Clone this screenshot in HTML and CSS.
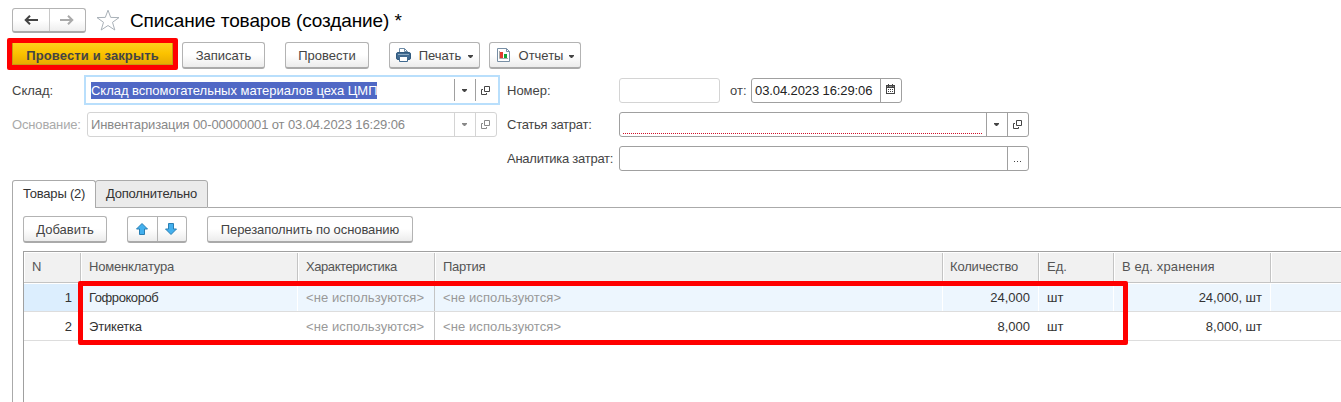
FILE: index.html
```html
<!DOCTYPE html>
<html lang="ru">
<head>
<meta charset="utf-8">
<title>Списание товаров (создание)</title>
<link rel="stylesheet" href="styles.css">
</head>
<body>
<svg class="defs" width="0" height="0">
  <symbol id="open" viewBox="0 0 9 9"><path d="M3.500 .5h5v5h-5zM2 3.500H.5v5h5V7" fill="none" stroke="currentColor"/></symbol>
  <symbol id="caret" viewBox="0 0 5 3"><path d="M0 0h5v1L3 3H2L0 1z" fill="currentColor"/></symbol>
</svg>
<header class="head">
  <div class="nav">
    <span class="nav-btn"><svg width="14" height="10" viewBox="0 0 14 10"><path d="M6 .7L1.700 5 6 9.300M2 5h12" fill="none" stroke="#444" stroke-width="2"/></svg></span>
    <span class="nav-btn"><svg width="14" height="10" viewBox="0 0 14 10"><path d="M8 .7L12.300 5 8 9.300M12 5H0" fill="none" stroke="#aaa" stroke-width="2"/></svg></span>
  </div>
  <svg class="star" width="24" height="22" viewBox="0 0 24 22"><path d="M12 1.200l2.700 7.200 8.300.2-6.500 4.700 2.300 7.700-6.800-4.500L5.200 21l2.300-7.700L1 8.600l8.300-.2z" fill="#fff" stroke="#a9b1b8"/></svg>
  <h1 class="title">Списание товаров (создание) *</h1>
</header>
<div class="bar">
  <div class="mark"><button class="primary">Провести и закрыть</button></div>
  <button class="btn b-save"><span>Записать</span></button>
  <button class="btn b-post"><span>Провести</span></button>
  <button class="btn b-print">
    <svg width="15" height="14" viewBox="0 0 15 14"><path d="M3.500 5V.5h5l3 3V5" fill="#fff" stroke="#6d8ba6"/><path d="M8.500.5v3h3" fill="none" stroke="#6d8ba6"/><rect x=".5" y="4.500" width="14" height="7" rx="1.500" fill="#416a90" stroke="#2f597e"/><path d="M2 6.500h11" stroke="#8caac2"/><path d="M3.500 8.500h8v5h-8z" fill="#fff" stroke="#416a90"/></svg>
    <span>Печать</span><svg class="caret" width="5" height="3"><use href="#caret"/></svg>
  </button>
  <button class="btn b-report">
    <svg width="13" height="14" viewBox="0 0 13 14"><path d="M.5.5h9l3 3v10H.5z" fill="#fff" stroke="#788fa5"/><path d="M9.500.5v3h3" fill="none" stroke="#788fa5"/><path d="M2.500 3v7.500H11" fill="none" stroke="#aaa"/><path d="M3 4h3v6H3z" fill="#e23b2e"/><path d="M7 6h3v4H7z" fill="#13a538"/></svg>
    <span>Отчеты</span><svg class="caret" width="5" height="3"><use href="#caret"/></svg>
  </button>
</div>
<main class="form">
  <div class="left">
    <label class="lab">Склад:</label>
    <div class="field focus"><span class="val"><span class="sel">Склад вспомогательных материалов цеха ЦМП</span></span><i class="act"><svg width="5" height="3"><use href="#caret"/></svg></i><i class="act"><svg width="9" height="9"><use href="#open"/></svg></i></div>
    <label class="lab off l-base">Основание:</label>
    <div class="field off"><span class="val v-base">Инвентаризация 00-00000001 от 03.04.2023 16:29:06</span><i class="act"><svg width="5" height="3"><use href="#caret"/></svg></i><i class="act"><svg width="9" height="9"><use href="#open"/></svg></i></div>
  </div>
  <div class="right">
    <label class="lab">Номер:</label>
    <div class="numrow">
      <div class="field off num"></div>
      <label class="lab from">от:</label>
      <div class="field date"><span class="val">03.04.2023 16:29:06</span><i class="act cal"><svg width="9" height="10" viewBox="0 0 9 10"><path d="M0 1h9v9H0z" fill="#444"/><path d="M1 4h7v5H1z" fill="#fff"/><path d="M1 2.500h1M3 2.500h3M7 2.500h1" stroke="#888"/><path d="M2.500 0v2M6.500 0v2" stroke="#444"/><path d="M2 5.500h6M2 7.500h6" stroke="#444" stroke-dasharray="1 1"/></svg></i></div>
    </div>
    <label class="lab l-cost">Статья затрат:</label>
    <div class="field"><span class="val"><span class="required"></span></span><i class="act"><svg width="5" height="3"><use href="#caret"/></svg></i><i class="act"><svg width="9" height="9"><use href="#open"/></svg></i></div>
    <label class="lab l-an">Аналитика затрат:</label>
    <div class="field"><span class="val"></span><i class="act dots"><svg width="7" height="1"><path d="M0 .5h1M3 .5h1M6 .5h1" stroke="#444"/></svg></i></div>
  </div>
</main>
<nav class="tabs">
  <span class="tab on">Товары (2)</span><span class="tab t2">Дополнительно</span><span class="rest"></span>
</nav>
<section class="panel">
  <div class="tools">
    <button class="btn b-add"><span>Добавить</span></button>
    <div class="updown">
      <svg width="12" height="12" viewBox="0 0 12 12"><path d="M6 .5L11.500 6H8.500v5.500h-5V6H.5z" fill="#43b0ee" stroke="#2b7fb3"/></svg>
      <svg width="12" height="12" viewBox="0 0 12 12"><path d="M6 11.500L.5 6h3V.5h5V6h3z" fill="#43b0ee" stroke="#2b7fb3"/></svg>
    </div>
    <button class="btn b-refill"><span>Перезаполнить по основанию</span></button>
  </div>
  <div class="grid">
    <div class="row hdr"><span>N</span><span><b class="h1">Номенклатура</b></span><span><b class="h2">Характеристика</b></span><span><b class="h3">Партия</b></span><span class="c4"><b class="h4">Количество</b></span><span><b>Ед.</b></span><span><b class="h6">В ед. хранения</b></span><span></span></div>
    <div class="row cur"><span class="r">1</span><span><b class="n1">Гофрокороб</b></span><span class="dim">&lt;не используются&gt;</span><span class="dim">&lt;не используются&gt;</span><span class="r q">24,000</span><span>шт</span><span class="r">24,000, шт</span><span></span></div>
    <div class="row last"><span class="r">2</span><span><b class="n2">Этикетка</b></span><span class="dim">&lt;не используются&gt;</span><span class="dim">&lt;не используются&gt;</span><span class="r q">8,000</span><span>шт</span><span class="r">8,000, шт</span><span></span></div>
    <div class="callout"></div>
  </div>
</section>
</body>
</html>
```
FILE: styles.css
```css
* { box-sizing: border-box; }
body { margin: 0; width: 1341px; height: 402px; overflow: hidden; display: flex; flex-direction: column; background: #fff; color: #444; font: 13px/16px "Liberation Sans", Arial, sans-serif; white-space: nowrap; }
svg { display: block; flex: none; }
.defs { position: absolute; }
button { font: inherit; color: inherit; margin: 0; padding: 0; }
b { font-weight: normal; }
.head { display: flex; height: 38px; padding: 8px 0 0 12px; }
.nav { display: flex; width: 74px; height: 25px; border: 1px solid #b3b3b3; border-bottom: 2px solid #aaa; border-radius: 3px; background: linear-gradient(#fff 50%, #eee); }
.nav-btn { flex: 1; display: flex; align-items: center; justify-content: center; }
.nav-btn + .nav-btn { border-left: 1px solid #c8c8c8; }
.star { margin: 1px 0 0 10px; }
.title { margin: 1px 0 0 10px; font-size: 19px; line-height: 23px; font-weight: normal; color: #000; letter-spacing: -.1px; }
.bar { display: flex; height: 37px; padding-left: 7px; align-items: flex-start; }
.mark { width: 171px; height: 32px; padding: 5px; background: #f00; border-radius: 2px; margin-right: 4px; }
.primary { display: block; width: 161px; height: 22px; border: 1px solid #c79a10; border-width: 0 1px 1px; background: linear-gradient(#ffd21c, #fbc200 50%, #e8ab00); font-weight: bold; line-height: 24px; letter-spacing: .12px; padding-top: 1px; }
.btn { display: flex; align-items: center; justify-content: center; height: 27px; border: 1px solid #b3b3b3; border-bottom: 2px solid #aaa; border-radius: 3px; background: linear-gradient(#fff 50%, #ececec); }
.btn > span { padding-top: 1px; }
.bar .btn { margin-top: 4px; }
.b-save { width: 83px; }
.b-post { width: 84px; margin-left: 20px; }
.b-print { width: 91px; margin-left: 20px; }
.b-report { width: 92px; margin-left: 9px; }
.b-print > span { margin: 0 7px 0 8px; }
.b-report { padding-left: 1px; }
.b-report > span { margin: 0 6px 0 9px; }
.caret { margin-top: 2px; }
.form { display: flex; height: 105px; }
.left { width: 507px; display: grid; grid-template: 30px 32px / 72px 416px; row-gap: 7px; padding-left: 12px; align-content: start; }
.right { display: grid; grid-template: 25px 25px 25px / 112px 410px; row-gap: 9px; padding-top: 3px; align-content: start; }
.lab { padding-top: 5px; }
.left .lab { padding-top: 8px; }
.left .l-base { padding-top: 5px; letter-spacing: -.15px; }
.l-cost, .l-an { letter-spacing: -.26px; }
.lab.off { color: #aaa; }
.field { display: flex; height: 25px; border: 1px solid #a0a0a0; border-radius: 3px; }
.field.off { border-color: #d4d4d4; color: #888; }
.left .field.off { margin: 0 3px; }
.field.focus { height: 30px; border: 2px solid #b9dffc; border-radius: 0; padding: 2px 2px 2px 1px; }
.val { flex: 1; padding: 4px 0 0 3px; }
.v-base { letter-spacing: -.12px; }
.sel { display: block; width: 286px; margin-left: 1px; background: #5068c5; color: #fff; letter-spacing: -.02px; line-height: 17px; }
.focus .val { padding-top: 3px; }
.act { width: 21px; border-left: 1px solid #a0a0a0; display: flex; align-items: center; justify-content: center; padding-right: 1px; }
.off .act { border-color: #d4d4d4; }
.numrow { display: flex; }
.num { width: 101px; }
.from { width: 31px; padding-left: 10px; }
.date { width: 151px; color: #222; letter-spacing: -.1px; }
.cal { padding-bottom: 3px; }
.required { display: block; height: 17px; margin-right: 3px; background: repeating-linear-gradient(90deg, #d0102a 0 1px, #fff 1px 2px) left bottom / 100% 1px no-repeat; }
.dots { padding-top: 5px; }
.tabs { display: flex; height: 28px; padding-left: 12px; }
.tab { border: 1px solid #aaa; border-bottom: 0; border-radius: 3px 3px 0 0; padding: 5px 0 0 10px; color: #333; width: 84px; letter-spacing: -.2px; }
.tab.t2 { width: 113px; margin-left: -1px; border-bottom: 1px solid #aaa; background: #ebebeb; }
.rest { flex: 1; border-bottom: 1px solid #aaa; }
.panel { flex: 1; margin-left: 12px; border-left: 1px solid #aaa; padding: 8px 0 0 10px; }
.tools { display: flex; }
.b-add { width: 84px; }
.updown { display: flex; width: 60px; height: 27px; margin: 0 20px; border: 1px solid #b3b3b3; border-bottom: 2px solid #aaa; border-radius: 3px; background: linear-gradient(#fff 50%, #ececec); align-items: stretch; }
.updown svg { width: 29px; height: 24px; padding: 6px 9px 6px 8px; }
.updown svg + svg { border-left: 1px solid #b3b3b3; padding-left: 7px; }
.b-refill { width: 206px; letter-spacing: -.08px; }
.grid { position: relative; margin-top: 8px; height: 151px; border: 1px solid #a0a0a0; border-width: 1px 0 0 1px; }
.row { display: grid; grid-template-columns: 57px 217px 137px 508px 96px 75px 157px 1fr; height: 29px; border-bottom: 1px solid #ddd; color: #333; }
.row > span { padding: 6px 8px 0; border-right: 1px solid transparent; }
.row.last > span { padding-top: 7px; }
.row > span:nth-child(3) { border-right-color: #c4c4c4; }
.row.hdr { height: 31px; background: #f1f1f1; border-top: 1px solid #fff; border-bottom: 1px solid #c4c4c4; color: #555; }
.row.hdr > span { border-right-color: #c4c4c4; border-left: 1px solid #fff; padding: 6px 7px 0; }
.row.hdr > span:last-child { border-right: 0; }
.row.hdr > .c4 { padding-left: 6px; }
.row.cur { background: #edf6fe; border-top: 1px solid #fff; }
.row.cur > span { border-right-color: #fff; }
.row.cur > span:last-child { border-right: 0; }
.row.cur > span:nth-child(3) { border-right-color: #c4c4c4; }
.row.cur > span:first-child { background: #dceefe; }
.row > .r { text-align: right; }
.row > .dim { color: #999; letter-spacing: .1px; }
.h1, .n2, .h4 { letter-spacing: -.18px; }
.h2, .n1 { letter-spacing: -.42px; }
.h3 { letter-spacing: -.25px; }
.h6 { letter-spacing: .13px; }
.callout { position: absolute; left: 54px; top: 29px; width: 1050px; height: 64px; border: 5px solid #f00; border-radius: 2px; }
```
